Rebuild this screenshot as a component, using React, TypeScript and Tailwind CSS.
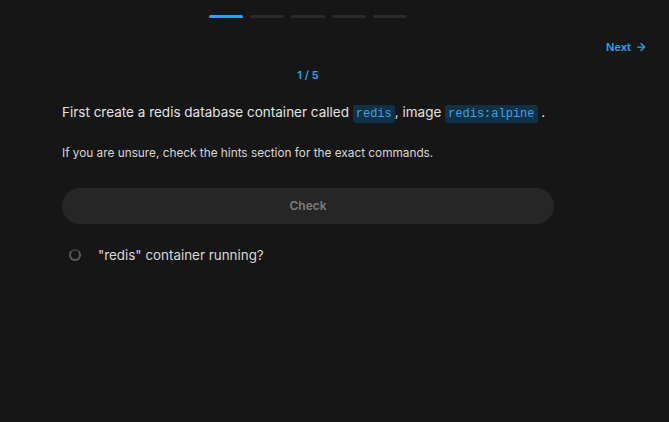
import React from "react";

const steps = [true, false, false, false, false];

const Code = ({ children }: { children: React.ReactNode }) => (
  <code className="rounded-[3px] bg-[#0f3249] px-[3px] py-[2px] font-['Liberation_Mono',monospace] text-[12px] text-[#3ba3e6]">
    {children}
  </code>
);

export default function App() {
  return (
    <div className="h-[422px] w-full overflow-hidden bg-[#161616] font-['Inter',sans-serif]">
      {/* progress */}
      <div className="flex w-[616px] justify-center gap-[7px] pt-[15px]">
        {steps.map((active, i) => (
          <div
            key={i}
            className={
              active
                ? "h-[3px] w-[34px] rounded-full bg-[#1fa8f2]"
                : "h-[3px] w-[34px] rounded-full bg-[#2a2a2a]"
            }
          />
        ))}
      </div>

      <div className="flex justify-end pr-[22px] pt-[21px]">
        <button className="flex items-center gap-[4px] text-[11px] font-semibold text-[#1fa8f2]">
          Next
          <svg width="12" height="12" viewBox="0 0 24 24" fill="none" stroke="currentColor" strokeWidth="2.5" strokeLinecap="round" strokeLinejoin="round">
            <path d="M5 12h14" />
            <path d="m12 5 7 7-7 7" />
          </svg>
        </button>
      </div>

      <div className="w-[616px] px-[62px]">
        <div className="pt-[11px] text-center text-[11px] font-semibold text-[#1fa8f2]">1 / 5</div>

        <p className="mt-[19px] text-[13.5px] leading-[20px] text-[#e2e2e2]">
          First create a redis database container called <Code>redis</Code>, image <Code>redis:alpine</Code> .
        </p>

        <p className="mt-[21px] text-[11.8px] leading-[16px] text-[#d6d6d6]">
          If you are unsure, check the hints section for the exact commands.
        </p>

        <button className="mt-[27px] flex h-[36px] w-full items-center justify-center rounded-full bg-[#262626] text-[12px] font-semibold text-[#7b7b7b]">
          Check
        </button>

        <div className="mt-[21px] flex items-center gap-[17px] pl-[7px]">
          <div className="h-[12px] w-[12px] rounded-full border-2 border-[#5a5a5a] border-t-[#3a3a3a]" />
          <span className="text-[13.4px] text-[#d8d8d8]">"redis" container running?</span>
        </div>
      </div>
    </div>
  );
}
